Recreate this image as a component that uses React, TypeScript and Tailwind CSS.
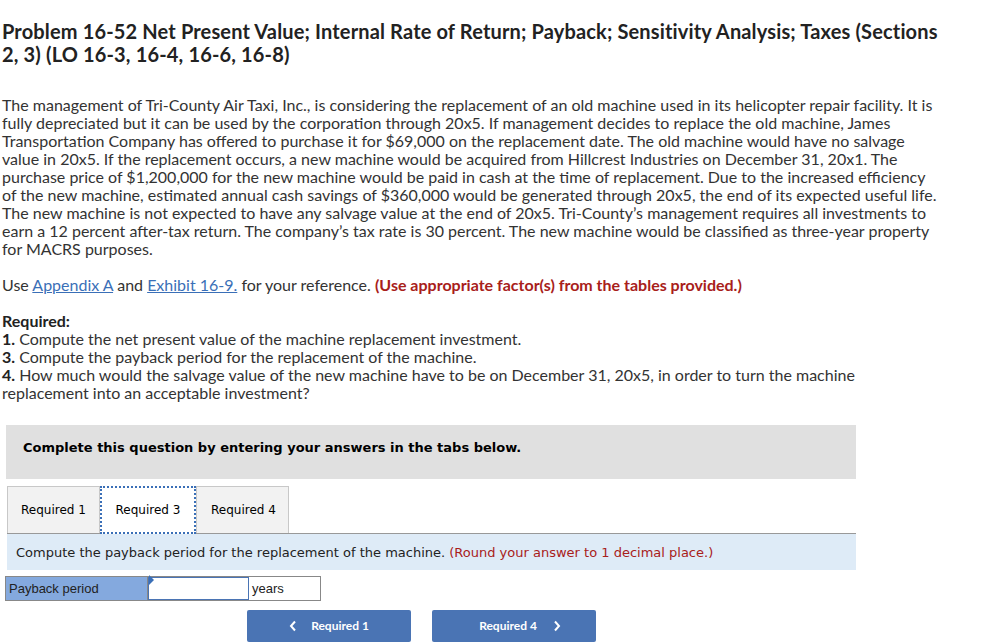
import React from "react";

const para = [
  "The management of Tri-County Air Taxi, Inc., is considering the replacement of an old machine used in its helicopter repair facility. It is",
  "fully depreciated but it can be used by the corporation through 20x5. If management decides to replace the old machine, James",
  "Transportation Company has offered to purchase it for $69,000 on the replacement date. The old machine would have no salvage",
  "value in 20x5. If the replacement occurs, a new machine would be acquired from Hillcrest Industries on December 31, 20x1. The",
  "purchase price of $1,200,000 for the new machine would be paid in cash at the time of replacement. Due to the increased efficiency",
  "of the new machine, estimated annual cash savings of $360,000 would be generated through 20x5, the end of its expected useful life.",
  "The new machine is not expected to have any salvage value at the end of 20x5. Tri-County\u2019s management requires all investments to",
  "earn a 12 percent after-tax return. The company\u2019s tax rate is 30 percent. The new machine would be classified as three-year property",
  "for MACRS purposes.",
];

export default function App() {
  return (
    <div className="w-[997px] h-[644px] overflow-hidden bg-white text-[#333] font-['Lato','Noto_Sans',sans-serif]">
      <div className="pl-[2px] pt-[20px]">
        <h1 className="text-[20px] leading-[23px] font-bold text-[#222] tracking-[0.15px]">
          <div className="whitespace-nowrap">Problem 16-52 Net Present Value; Internal Rate of Return; Payback; Sensitivity Analysis; Taxes (Sections</div>
          <div className="whitespace-nowrap">2, 3) (LO 16-3, 16-4, 16-6, 16-8)</div>
        </h1>
        <div className="mt-[30px] text-[16px] leading-[18px]">
          {para.map((l, i) => (
            <div key={i} className="whitespace-nowrap">{l}</div>
          ))}
        </div>
        <div className="mt-[18px] text-[16px] leading-[18px] whitespace-nowrap">
          Use <span className="text-[#3a6fb7] underline">Appendix A</span> and{" "}
          <span className="text-[#3a6fb7] underline">Exhibit 16-9.</span> for your reference.{" "}
          <span className="font-bold text-[#a8201a]">(Use appropriate factor(s) from the tables provided.)</span>
        </div>
        <div className="mt-[18px] text-[16px] leading-[18px]">
          <div className="font-bold text-[#222]">Required:</div>
          <div className="whitespace-nowrap"><b className="text-[#222]">1.</b> Compute the net present value of the machine replacement investment.</div>
          <div className="whitespace-nowrap"><b className="text-[#222]">3.</b> Compute the payback period for the replacement of the machine.</div>
          <div className="whitespace-nowrap"><b className="text-[#222]">4.</b> How much would the salvage value of the new machine have to be on December 31, 20x5, in order to turn the machine</div>
          <div className="whitespace-nowrap">replacement into an acceptable investment?</div>
        </div>
      </div>

      <div className="ml-[6px] mt-[23px] w-[850px] h-[54px] bg-[#e0e0e0] flex items-start pt-[13px] pl-[17px] font-['DejaVu_Sans',Verdana,sans-serif] font-bold text-[13px] text-black">
        Complete this question by entering your answers in the tabs below.
      </div>

      <div className="ml-[7px] mt-[7px] w-[849px] font-['DejaVu_Sans',Verdana,sans-serif] text-[12px] text-black">
        <div className="flex h-[48px] border-b border-[#999]">
          <div className="w-[93px] bg-[#f2f2f2] border border-[#c8c8c8] border-b-0 flex items-center justify-center">Required 1</div>
          <div className="w-[96px] bg-white border-2 border-dotted border-[#3a6fb7] mb-[-1px] flex items-center justify-center">Required 3</div>
          <div className="w-[93px] bg-[#f2f2f2] border border-[#c8c8c8] border-b-0 flex items-center justify-center pl-[2px]">Required 4</div>
        </div>
        <div className="h-[36px] bg-[#deebf7] flex items-center pl-[9px] pt-[1px] text-[13px] text-[#222]">
          Compute the payback period for the replacement of the machine.&nbsp;
          <span className="text-[#a8201a]">(Round your answer to 1 decimal place.)</span>
        </div>
      </div>

      <div className="ml-[5px] mt-[6px] flex h-[25px] w-[316px] border border-[#888] font-['Liberation_Sans',Arial,sans-serif] text-[13px] text-[#222]">
        <div className="w-[142px] bg-[#84a9de] flex items-center pl-[3px] border-r border-[#888]">Payback period</div>
        <div className="relative w-[101px] border border-[#4a74b4] bg-white">
          <div className="absolute left-0 top-0 w-0 h-0 border-t-[5px] border-t-transparent border-b-[5px] border-b-transparent border-l-[5px] border-l-[#3a6fb7] -translate-y-[3px]"></div>
        </div>
        <div className="flex-1 flex items-center pl-[3px] bg-white">years</div>
      </div>

      <div className="ml-[247px] mt-[9px] flex gap-[21px] font-['Lato','Noto_Sans',sans-serif] text-[12px] font-bold text-white">
        <div className="w-[164px] h-[32px] rounded-[2px] bg-[#4a74b4] flex items-center justify-center gap-[14px]">
          <svg width="8" height="12" viewBox="0 0 8 12"><path d="M6 1.5 L2 6 L6 10.5" stroke="white" strokeWidth="2" fill="none" /></svg>
          <span>Required 1</span>
        </div>
        <div className="w-[164px] h-[32px] rounded-[2px] bg-[#4a74b4] flex items-center justify-center gap-[16px] pl-[12px]">
          <span>Required 4</span>
          <svg width="8" height="12" viewBox="0 0 8 12"><path d="M2 1.5 L6 6 L2 10.5" stroke="white" strokeWidth="2" fill="none" /></svg>
        </div>
      </div>
    </div>
  );
}
